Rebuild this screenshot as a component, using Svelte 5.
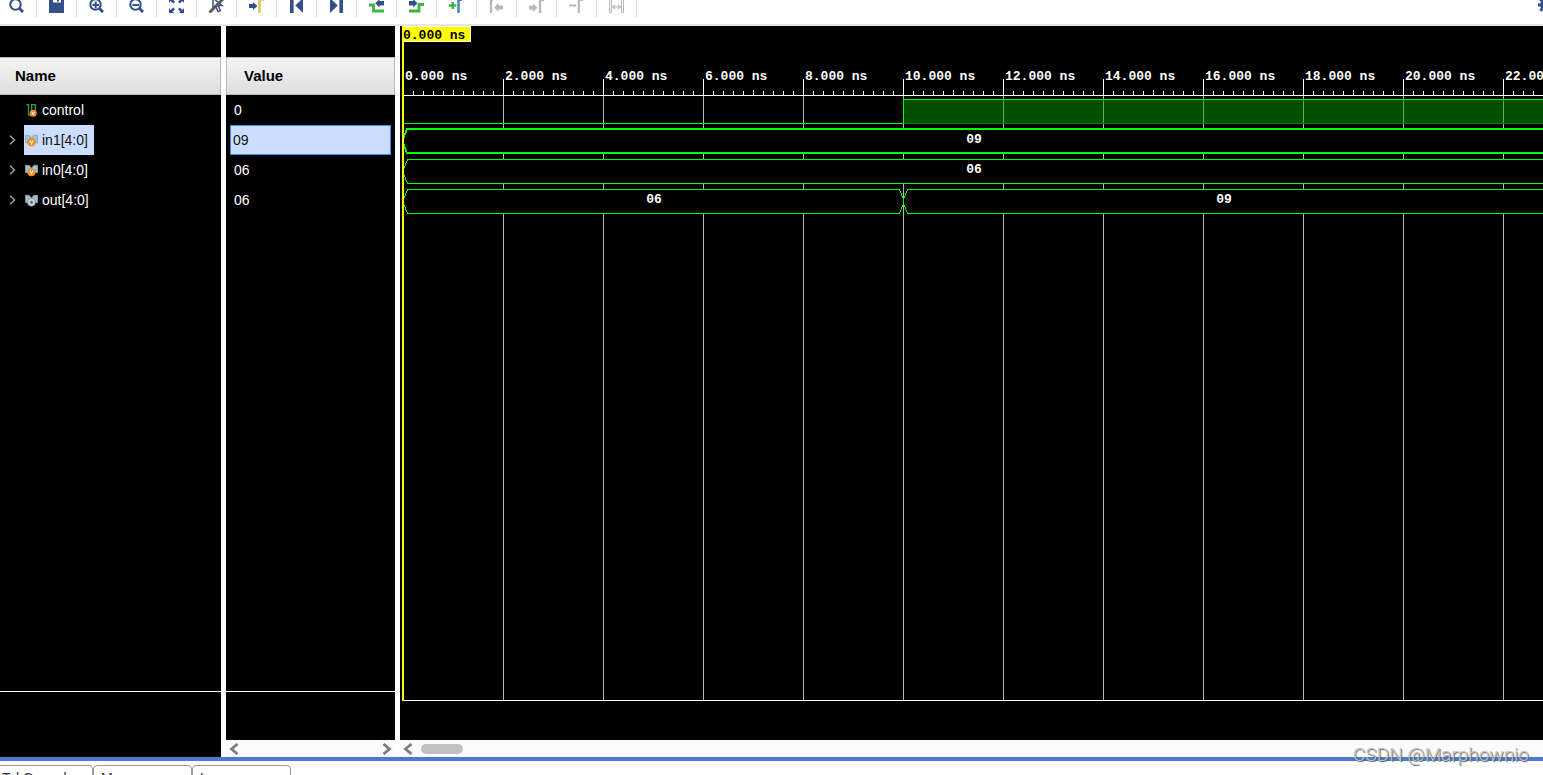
<script>
  const PX_PER_NS = 50
  const ORIGIN = 3
  const RULER_Y = 69

  const signals = [
    { name: 'control', value: '0', icon: 'bit', top: 73, wave: [{ from: 0, to: 10, level: 0 }, { from: 10, level: 1 }] },
    { name: 'in1[4:0]', value: '09', icon: 'bus-v', top: 103, wave: [{ from: 0, text: '09' }] },
    { name: 'in0[4:0]', value: '06', icon: 'bus-v', top: 133, wave: [{ from: 0, text: '06' }] },
    { name: 'out[4:0]', value: '06', icon: 'bus', top: 163, wave: [{ from: 0, to: 10, text: '06' }, { from: 10, text: '09' }] }
  ]

  const tools = [
    { id: 'search', label: 'Search' },
    { id: 'save', label: 'Save waveform' },
    { id: 'zoom-in', label: 'Zoom in' },
    { id: 'zoom-out', label: 'Zoom out' },
    { id: 'fit', label: 'Zoom fit' },
    { id: 'no-cursor', label: 'Lock cursor' },
    { id: 'goto', label: 'Go to cursor' },
    { id: 'first', label: 'Go to start' },
    { id: 'last', label: 'Go to end' },
    { id: 'prev-edge', label: 'Previous transition' },
    { id: 'next-edge', label: 'Next transition' },
    { id: 'add-marker', label: 'Add marker' },
    { id: 'prev-marker', label: 'Previous marker', disabled: true },
    { id: 'next-marker', label: 'Next marker', disabled: true },
    { id: 'del-marker', label: 'Remove marker', disabled: true },
    { id: 'swap', label: 'Swap cursors', disabled: true }
  ]

  const tabs = ['Tcl Console', 'Messages', 'Log']

  let width = $state(1143)
  let height = $state(714)
  let selected = $state('in1[4:0]')

  let bottom = $derived(height - 40)
  let ticks = $derived(Array.from({ length: Math.floor((width - ORIGIN) / 10) }, (_, i) => i + 1))
  let majors = $derived(Array.from({ length: Math.floor((width - ORIGIN) / 100) + 1 }, (_, i) => i))

  function xOf(ns) {
    return ORIGIN + ns * PX_PER_NS
  }

  function endOf(seg) {
    return seg.to === undefined ? width : xOf(seg.to)
  }

  function busPath(seg, top) {
    const a = xOf(seg.from)
    const b = endOf(seg)
    const mid = top + 12
    const low = top + 24
    if (seg.to === undefined) {
      return `M${b + 4} ${top}H${a + 4}L${a} ${mid - 2}V${mid + 2}L${a + 4} ${low}H${b + 4}`
    }
    return `M${a + 4} ${top}H${b - 4}L${b} ${mid - 2}V${mid + 2}L${b - 4} ${low}H${a + 4}L${a} ${mid + 2}V${mid - 2}Z`
  }
</script>

{#snippet toolIcon(id)}
  <svg class="tool-icon" viewBox="0 0 16 16" width="16" height="16" aria-hidden="true">
    {#if id === 'search' || id === 'zoom-in' || id === 'zoom-out'}
      <circle cx="7.5" cy="7.5" r="5.2" fill="none" stroke="currentColor" stroke-width="2" />
      <path d="M11.5 11.5L15 15" stroke="currentColor" stroke-width="3" />
      {#if id !== 'search'}<path d="M4.5 8h6.5" stroke="currentColor" stroke-width="2" />{/if}
      {#if id === 'zoom-in'}<path d="M7.7 4.5v7" stroke="currentColor" stroke-width="2" />{/if}
    {:else if id === 'save'}
      <path d="M1 1h15v15H1z" fill="currentColor" />
      <path d="M5 1h8v4.5H5z" fill="#fff" />
      <path d="M9 1h2v3.5H9z" fill="currentColor" />
    {:else if id === 'fit'}
      <path d="M1 1h5L4.6 2.4 7 4.8 5.3 6.5 2.6 4.1 1 6zM16 1h-5l1.4 1.4L10 4.8l1.7 1.7 2.7-2.4L16 6zM1 16h5l-1.4-1.4L7 12.2l-1.7-1.7-2.7 2.4L1 11zM16 16h-5l1.4-1.4-2.4-2.4 1.7-1.7 2.7 2.4L16 11z" fill="currentColor" />
    {:else if id === 'no-cursor'}
      <path d="M5 1v10l2.6-2 2.4 5.5 2.4-1L10.2 8.5H14z" fill="#fff" stroke="currentColor" stroke-width="1.5" />
      <path d="M1.5 15.5L15 2" stroke="#5a5a5a" stroke-width="3" />
    {:else if id === 'goto'}
      <path d="M1 7h4V5l4.5 4L5 13v-2H1z" fill="currentColor" />
      <path d="M11.5 16V2.5H16" fill="none" stroke="#e3c55b" stroke-width="2.6" />
    {:else if id === 'first'}
      <path d="M2 1h3.6v15H2zM15 1v15L7.3 8.5z" fill="currentColor" />
    {:else if id === 'last'}
      <path d="M11.4 1H15v15h-3.6zM2 1v15l7.7-7.5z" fill="currentColor" />
    {:else if id === 'prev-edge'}
      <path d="M1 8h4.5v6H16" fill="none" stroke="#3cb63c" stroke-width="2.8" />
      <path d="M7.2 6.2L11.5 2v2H16v4.5h-4.5v2z" fill="currentColor" />
    {:else if id === 'next-edge'}
      <path d="M1 14h10V7.5h5" fill="none" stroke="#3cb63c" stroke-width="2.8" />
      <path d="M9.5 6.2L5.2 2v2H1v4.5h4.2v2z" fill="currentColor" />
    {:else if id === 'add-marker'}
      <path d="M1 8.5h7.4M4.7 5v7" stroke="#3cb63c" stroke-width="2.4" />
      <path d="M10.5 16V2.7H14" fill="none" stroke="#3b87b8" stroke-width="2.4" />
    {:else if id === 'prev-marker'}
      <path d="M3 2v14M2 3h3" stroke="currentColor" stroke-width="2.4" />
      <path d="M6 10.5L10.5 6v2.4H15v4h-4.5v2.4z" fill="currentColor" />
    {:else if id === 'next-marker'}
      <path d="M1 8.7h4V6.4l4.4 4.3L5 15v-2.3H1z" fill="currentColor" />
      <path d="M12 16V3h4" fill="none" stroke="currentColor" stroke-width="2.4" />
    {:else if id === 'del-marker'}
      <path d="M1 8.5h7M10.8 16V3H15" fill="none" stroke="currentColor" stroke-width="2.2" />
    {:else if id === 'swap'}
      <path d="M1.5 2v13.5h2V2M13.5 2v13.5h2V2z" fill="none" stroke="currentColor" />
      <path d="M5 10h7M7 7.8L4.8 10 7 12.2M10 7.8l2.2 2.2-2.2 2.2" fill="none" stroke="currentColor" stroke-width="1.2" />
    {:else if id === 'settings'}
      <circle cx="8" cy="8" r="4.4" fill="none" stroke="currentColor" stroke-width="3" />
      <path d="M8 0v3M8 13v3M0 8h3M13 8h3M2.3 2.3l2 2M11.7 11.7l2 2M2.3 13.7l2-2M11.7 4.3l2-2" stroke="currentColor" stroke-width="3" />
    {/if}
  </svg>
{/snippet}

{#snippet signalIcon(kind)}
  <svg class="signal-icon" viewBox="0 0 13 13" width="13" height="13" aria-hidden="true">
    {#if kind === 'bit'}
      <path d="M1.5 .6h2v10.5h2.5M6.6 9V.6h3.8V7" fill="none" stroke="#2f9e44" stroke-width="1.3" />
      <circle cx="8.2" cy="9.3" r="3.5" fill="#f28c1e" />
      <path d="M6.8 7.8l1.4 3 1.4-3" fill="none" stroke="#fff" />
    {:else}
      <path d="M.3 1.3h3.9l2.3 2.9 2.3-2.9h3.9v7.4H9.5L6.5 7 3.5 9 .3 8.4z" fill="#9cc3d5" stroke="#7d99a6" stroke-width=".7" />
      {#if kind === 'bus-v'}
        <circle cx="6.5" cy="8.2" r="4.1" fill="#f28c1e" />
        <path d="M5 6.6l1.5 3.2L8 6.6" fill="none" stroke="#fff" stroke-width="1.1" />
      {:else}
        <circle cx="6.5" cy="8.2" r="4" fill="#d2d2d2" stroke="#777" stroke-width=".6" />
        <circle cx="6.5" cy="8.2" r="1.5" fill="#666" />
      {/if}
    {/if}
  </svg>
{/snippet}

{#snippet chevron(dir)}
  <svg viewBox="0 0 10 12" width="10" height="12" aria-hidden="true">
    <path d={dir === 'left' ? 'M8.5 1L2.5 6l6 5' : 'M1.5 1l6 5-6 5'} fill="none" stroke="#7d7d7d" stroke-width="2.8" />
  </svg>
{/snippet}

<div class="app">
  <header class="toolbar">
    {#each tools as tool (tool.id)}
      <button class="tool" disabled={tool.disabled} aria-label={tool.label}>{@render toolIcon(tool.id)}</button>
    {/each}
    <button class="tool settings" aria-label="Settings">{@render toolIcon('settings')}</button>
  </header>

  <main class="viewer">
    <section class="pane names">
      <table>
        <thead>
          <tr><th>Name</th></tr>
        </thead>
        <tbody>
          {#each signals as s (s.name)}
            <tr>
              <td>
                <div class="row">
                  {#if s.icon === 'bit'}
                    <span class="expand"></span>
                  {:else}
                    <button class="expand" aria-label="Expand {s.name}">
                      <svg viewBox="0 0 7 10" width="7" height="10" aria-hidden="true">
                        <path d="M1 .8L5.5 5 1 9.2" fill="none" stroke="#a0a0a0" stroke-width="1.5" />
                      </svg>
                    </button>
                  {/if}
                  <button class="signal" class:selected={selected === s.name} onclick={() => (selected = s.name)}>
                    {@render signalIcon(s.icon)}
                    {s.name}
                  </button>
                </div>
              </td>
            </tr>
          {/each}
        </tbody>
      </table>
      <div class="foot"></div>
    </section>

    <section class="pane values">
      <table>
        <thead>
          <tr><th>Value</th></tr>
        </thead>
        <tbody>
          {#each signals as s (s.name)}
            <tr>
              <td><div class="value" class:selected={selected === s.name}>{s.value}</div></td>
            </tr>
          {/each}
        </tbody>
      </table>
      <div class="foot"></div>
      <div class="scrollbar">
        <button aria-label="Scroll values left">{@render chevron('left')}</button>
        <button aria-label="Scroll values right">{@render chevron('right')}</button>
      </div>
    </section>

    <section class="pane waves">
      <div class="plot" bind:clientWidth={width} bind:clientHeight={height}>
        <svg class="canvas" {width} {height} shape-rendering="crispEdges">
          <!-- grid and ruler -->
          {#each majors as m (m)}
            <rect class="grid" x={ORIGIN + m * 100} y={RULER_Y + 1} width="1" height={bottom - RULER_Y} />
            <rect class="ink" x={ORIGIN + m * 100} y="53" width="1" height="17" />
            <text class="ink" x={ORIGIN + m * 100 + 2} y="54">{(m * 2).toFixed(3)} ns</text>
          {/each}
          {#each ticks as t (t)}
            <rect class="ink" x={ORIGIN + t * 10} y={t % 5 ? 65 : 64} width="1" height="5" />
          {/each}
          <rect class="ink" x={ORIGIN} y={RULER_Y} {width} height="1" />
          <rect class="ink" x={ORIGIN} y={bottom} {width} height="1" />

          <!-- signals -->
          {#each signals as s (s.name)}
            {#each s.wave as seg (seg.from)}
              {#if s.icon === 'bit'}
                {#if seg.level}
                  <rect class="high" x={xOf(seg.from)} y={s.top} width={endOf(seg) - xOf(seg.from)} height="25" />
                  <rect class="high-base" x={xOf(seg.from)} y={s.top + 24} width={endOf(seg) - xOf(seg.from)} height="1" />
                  <rect class="line" x={xOf(seg.from)} y={s.top} width={endOf(seg) - xOf(seg.from)} height="1" />
                  <rect class="line" x={xOf(seg.from)} y={s.top} width="1" height="25" />
                {:else}
                  <rect class="line" x={xOf(seg.from)} y={s.top + 24} width={endOf(seg) - xOf(seg.from)} height="1" />
                {/if}
              {:else}
                <path class="bus" class:thick={selected === s.name} d={busPath(seg, s.top)} transform={selected === s.name ? undefined : 'translate(.5 .5)'} />
                <text class="ink bus-text" x={Math.floor((xOf(seg.from) + endOf(seg)) / 2) + 1} y={s.top + 14}>{seg.text}</text>
              {/if}
            {/each}
          {/each}

          <!-- time cursor -->
          <rect class="cursor" x="2" y="0" width="2" height={bottom + 1} />
        </svg>
        <span class="cursor-time">0.000 ns</span>
      </div>
      <div class="scrollbar">
        <button aria-label="Scroll waveform left">{@render chevron('left')}</button>
        <span class="thumb"></span>
      </div>
    </section>
  </main>

  <nav class="tabs">
    {#each tabs as tab (tab)}
      <button class="tab">{tab}</button>
    {/each}
  </nav>

  <span class="watermark">CSDN @Marphownio</span>
</div>

<style>
  :global(body) {
    background: #fff;
  }

  .app {
    position: relative;
    display: flex;
    flex-direction: column;
    height: 100vh;
    overflow: hidden;
    font-family: 'Liberation Sans', Arial, sans-serif;
    font-size: 14px;
    color: #000;
  }

  button {
    margin: 0;
    padding: 0;
    border: 0;
    background: none;
    font: inherit;
    color: inherit;
  }

  svg {
    display: block;
    flex: none;
  }

  .toolbar {
    box-sizing: border-box;
    display: flex;
    flex: none;
    align-items: flex-end;
    height: 26px;
    margin: 0 -14px 0 -3px;
    padding-bottom: 7px;
    border-bottom: 2px solid #e6e6e6;
    overflow: hidden;
  }

  .tool {
    box-sizing: border-box;
    display: flex;
    flex: none;
    align-items: center;
    width: 40px;
    height: 24px;
    padding-left: 11px;
    border-right: 1px solid #d8d8d8;
    color: #34508a;
  }

  .tool:disabled {
    color: #b8b8b8;
  }

  .settings {
    width: 30px;
    margin-left: auto;
    border-right: 0;
  }

  .viewer {
    display: grid;
    grid-template-columns: 221px 169px minmax(0, 1fr);
    gap: 5px;
    flex: 1;
    min-height: 0;
    border-bottom: 4px solid #4a7bcf;
  }

  .pane {
    display: flex;
    flex-direction: column;
    min-width: 0;
    min-height: 0;
    background: #000;
    color: #fff;
  }

  table {
    width: 100%;
    margin: 31px 0 auto;
    border-collapse: separate;
    border-spacing: 0;
  }

  th {
    box-sizing: border-box;
    height: 38px;
    padding: 0 15px 2px;
    border: 1px solid #b9b9b9;
    border-left-width: 0;
    background: linear-gradient(#f4f4f4, #dededf);
    color: #000;
    font-size: 15px;
    text-align: left;
  }

  .values th {
    padding-left: 17px;
    border-left-width: 1px;
  }

  td {
    height: 30px;
    padding: 0;
  }

  .row {
    display: flex;
    height: 30px;
  }

  .expand {
    display: flex;
    align-items: center;
    width: 24px;
    padding-left: 9px;
    box-sizing: border-box;
  }

  .signal {
    display: flex;
    align-items: center;
    gap: 4px;
    padding: 0 6px 0 1px;
  }

  .selected {
    background: #ccdeff;
    color: #111;
  }

  .value {
    box-sizing: border-box;
    height: 30px;
    margin: 0 4px;
    padding: 0 4px;
    line-height: 30px;
  }

  .value.selected {
    padding: 0 2px;
    border: 1px solid #3c92d8;
    line-height: 28px;
  }

  .foot {
    flex: none;
    height: 48px;
    border-top: 1px solid #fff;
  }

  .names .foot {
    height: 65px;
  }

  .scrollbar {
    display: flex;
    flex: none;
    align-items: center;
    justify-content: space-between;
    height: 17px;
    padding: 0 3px;
    background: #fbfbfb;
  }

  .waves .scrollbar {
    justify-content: flex-start;
    gap: 8px;
  }

  .thumb {
    width: 42px;
    height: 10px;
    border-radius: 5px;
    background: #c1c1c1;
  }

  .plot {
    position: relative;
    flex: 1;
    min-height: 0;
    overflow: hidden;
    font-family: 'Liberation Mono', 'Courier New', monospace;
    font-size: 13px;
    font-weight: bold;
  }

  .canvas {
    position: absolute;
  }

  .ink {
    fill: #fff;
  }

  .grid {
    fill: #b8b8b8;
  }

  .line {
    fill: #0f0;
  }

  .high {
    fill: #00a000;
    fill-opacity: .5;
  }

  .high-base {
    fill: #008000;
  }

  .bus {
    fill: #000;
    stroke: #0f0;
    stroke-width: 1;
  }

  .thick {
    stroke-width: 2;
  }

  .bus-text {
    text-anchor: middle;
  }

  .cursor {
    fill: #ff0;
  }

  .cursor-time {
    position: absolute;
    top: 0;
    left: 3px;
    box-sizing: border-box;
    height: 16px;
    padding-right: 5px;
    border: solid #ffffd0;
    border-width: 1px 1px 1px 0;
    background: #ff0;
    color: #000;
    line-height: 17px;
  }

  .tabs {
    display: flex;
    flex: none;
    align-items: flex-start;
    height: 10px;
    margin-left: -6px;
    padding-top: 4px;
    overflow: hidden;
  }

  .tab {
    box-sizing: border-box;
    width: 99px;
    height: 26px;
    padding: 0 7px;
    border: 1px solid #999;
    border-radius: 4px 4px 0 0;
    color: #333;
    line-height: 24px;
    text-align: left;
  }

  .watermark {
    position: absolute;
    right: 14px;
    bottom: 9px;
    color: #c4c4c4;
    font-family: Roboto, 'Liberation Sans', sans-serif;
    font-size: 19px;
    font-weight: 300;
    line-height: 22px;
    text-shadow: 1px 1px 1px #555;
  }
</style>
